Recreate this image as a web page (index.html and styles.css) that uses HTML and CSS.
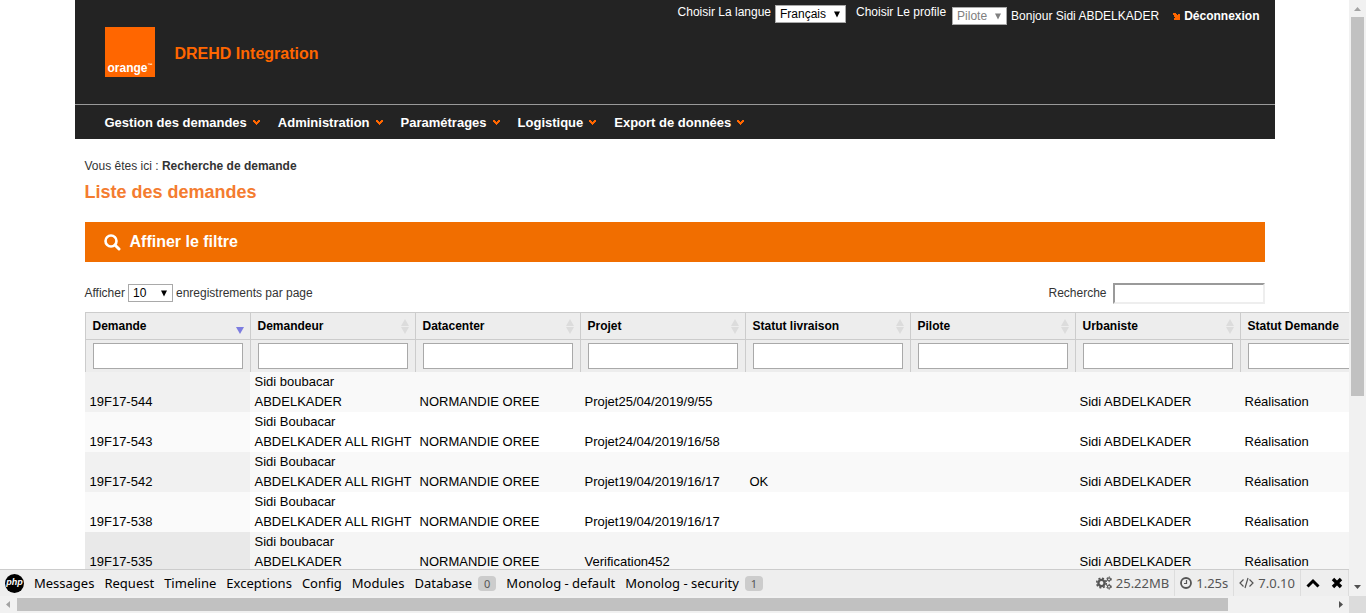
FILE: index.html
```html
<!DOCTYPE html>
<html lang="fr">
<head>
<meta charset="utf-8">
<title>DREHD Integration - Liste des demandes</title>
<link rel="stylesheet" href="styles.css">
</head>
<body>
<svg class="defs" aria-hidden="true">
  <symbol id="tri" viewBox="0 0 8 7"><path d="M1 0.5h6L4 6.5z"/></symbol>
  <symbol id="chev" viewBox="0 0 7 5"><path d="M0 0h2v1h1v1h1V1h1V0h2v2H6v1H5v1H4v1H3V4H2V3H1V2H0z"/></symbol>
  <symbol id="sort" viewBox="0 0 8 15"><path d="M4 0l4 7H0zM0 8h8l-4 7z"/></symbol>
</svg>
<div class="frame">
  <div class="view">
    <div class="content">
      <header class="header">
        <div class="top">
          <div class="brand">
            <div class="logo">orange<span class="tm">™</span></div>
            <div class="app">DREHD Integration</div>
          </div>
          <div class="user">
            <label class="pick" for="langue">Choisir La langue</label>
            <span class="sel lang"><select id="langue"><option>Français</option></select><svg><use href="#tri"/></svg></span>
            <label class="pick second" for="profil">Choisir Le profile</label>
            <span class="sel role"><select id="profil" disabled><option>Pilote</option></select><svg><use href="#tri"/></svg></span>
            <span class="hello">Bonjour Sidi ABDELKADER</span>
            <a class="logout" href="#"><svg viewBox="0 0 7 7"><path d="M0 0h3v1h1v1h1V1h2v6H1V5h1V4H1V2H0z"/></svg>Déconnexion</a>
          </div>
        </div>
        <nav class="nav">
          <a href="#">Gestion des demandes<svg><use href="#chev"/></svg></a>
          <a href="#">Administration<svg><use href="#chev"/></svg></a>
          <a href="#">Paramétrages<svg><use href="#chev"/></svg></a>
          <a href="#">Logistique<svg><use href="#chev"/></svg></a>
          <a href="#">Export de données<svg><use href="#chev"/></svg></a>
        </nav>
      </header>
      <main class="main">
        <p class="crumb">Vous êtes ici : <b>Recherche de demande</b></p>
        <h1>Liste des demandes</h1>
        <button class="filter" type="button"><svg viewBox="0 0 17 17"><circle cx="7" cy="7" r="5.500" fill="none" stroke="#fff" stroke-width="2.600"/><path d="M11.200 11.200l3.800 3.800" stroke="#fff" stroke-width="3" stroke-linecap="round"/></svg>Affiner le filtre</button>
        <div class="tools">
          <div class="length"><label for="nb">Afficher</label><span class="sel count"><select id="nb"><option>10</option></select><svg><use href="#tri"/></svg></span><span>enregistrements par page</span></div>
          <div class="search"><label for="q">Recherche</label><input id="q" type="search"></div>
        </div>
        <table class="grid">
          <thead>
            <tr>
              <th class="sorted"><div>Demande<svg viewBox="0 0 8 15"><path d="M0 8h8l-4 7z"/></svg></div></th>
              <th><div>Demandeur<svg><use href="#sort"/></svg></div></th>
              <th><div>Datacenter<svg><use href="#sort"/></svg></div></th>
              <th><div>Projet<svg><use href="#sort"/></svg></div></th>
              <th><div>Statut livraison<svg><use href="#sort"/></svg></div></th>
              <th><div>Pilote<svg><use href="#sort"/></svg></div></th>
              <th><div>Urbaniste<svg><use href="#sort"/></svg></div></th>
              <th><div>Statut Demande<svg><use href="#sort"/></svg></div></th>
            </tr>
            <tr class="inputs">
              <td><input type="text" aria-label="Demande"></td>
              <td><input type="text" aria-label="Demandeur"></td>
              <td><input type="text" aria-label="Datacenter"></td>
              <td><input type="text" aria-label="Projet"></td>
              <td><input type="text" aria-label="Statut livraison"></td>
              <td><input type="text" aria-label="Pilote"></td>
              <td><input type="text" aria-label="Urbaniste"></td>
              <td><input type="text" aria-label="Statut Demande"></td>
            </tr>
          </thead>
          <tbody>
            <tr><td>19F17-544</td><td>Sidi boubacar<br>ABDELKADER</td><td>NORMANDIE OREE</td><td>Projet25/04/2019/9/55</td><td></td><td></td><td>Sidi ABDELKADER</td><td>Réalisation</td></tr>
            <tr><td>19F17-543</td><td>Sidi Boubacar<br>ABDELKADER ALL RIGHT</td><td>NORMANDIE OREE</td><td>Projet24/04/2019/16/58</td><td></td><td></td><td>Sidi ABDELKADER</td><td>Réalisation</td></tr>
            <tr><td>19F17-542</td><td>Sidi Boubacar<br>ABDELKADER ALL RIGHT</td><td>NORMANDIE OREE</td><td>Projet19/04/2019/16/17</td><td>OK</td><td></td><td>Sidi ABDELKADER</td><td>Réalisation</td></tr>
            <tr><td>19F17-538</td><td>Sidi Boubacar<br>ABDELKADER ALL RIGHT</td><td>NORMANDIE OREE</td><td>Projet19/04/2019/16/17</td><td></td><td></td><td>Sidi ABDELKADER</td><td>Réalisation</td></tr>
            <tr class="hover"><td>19F17-535</td><td>Sidi boubacar<br>ABDELKADER</td><td>NORMANDIE OREE</td><td>Verification452</td><td></td><td></td><td>Sidi ABDELKADER</td><td>Réalisation</td></tr>
          </tbody>
        </table>
      </main>
    </div>
    <footer class="debug">
      <div class="tabs">
        <span class="php">php</span>
        <a href="#">Messages</a><a href="#">Request</a><a href="#">Timeline</a><a href="#">Exceptions</a><a href="#">Config</a><a href="#">Modules</a><a href="#">Database<span class="badge">0</span></a><a href="#">Monolog - default</a><a href="#">Monolog - security<span class="badge">1</span></a>
      </div>
      <div class="stats">
        <span class="stat"><svg class="gears" viewBox="0 0 16 14"><g fill="none" stroke="#555"><circle cx="5.500" cy="7" r="3.100" stroke-width="2.400"/><circle cx="5.500" cy="7" r="4.800" stroke-width="1.600" stroke-dasharray="2 1.770"/><circle cx="13" cy="3.300" r="1.500" stroke-width="1.200"/><circle cx="13" cy="3.300" r="2.400" stroke-width="1" stroke-dasharray="1.200 1.300"/><circle cx="13" cy="10.700" r="1.500" stroke-width="1.200"/><circle cx="13" cy="10.700" r="2.400" stroke-width="1" stroke-dasharray="1.200 1.300"/></g></svg>25.22MB</span>
        <span class="stat"><svg class="clock" viewBox="0 0 12 12"><g fill="none" stroke="#555"><circle cx="6" cy="6" r="5" stroke-width="1.800"/><path d="M6.500 3v3.500H4" stroke-width="1.200"/></g></svg>1.25s</span>
        <span class="stat"><svg class="code" viewBox="0 0 15 12"><path d="M4.500 2.500L1 6l3.500 3.500M10.500 2.500L14 6l-3.500 3.500M9 1L6 11" fill="none" stroke="#555" stroke-width="1.200"/></svg>7.0.10</span>
        <button type="button" aria-label="Réduire"><svg viewBox="0 0 14 12"><path d="M1.500 9.500L7 4l5.500 5.500" fill="none" stroke="#000" stroke-width="3"/></svg></button>
        <button type="button" aria-label="Fermer"><svg viewBox="0 0 12 12"><path d="M2 2l8 8M10 2l-8 8" fill="none" stroke="#000" stroke-width="3.400"/></svg></button>
      </div>
    </footer>
  </div>
  <div class="vbar" aria-hidden="true"><svg viewBox="0 0 17 17"><path d="M5 11h7L8.500 7z" fill="#a3a3a3"/></svg><i></i><svg viewBox="0 0 17 17"><path d="M5 6h7l-3.500 4z" fill="#505050"/></svg></div>
  <div class="hbar" aria-hidden="true"><svg viewBox="0 0 17 17"><path d="M10 5v7L6 8.500z" fill="#a3a3a3"/></svg><i></i><svg viewBox="0 0 17 17"><path d="M7 5v7l4-3.500z" fill="#505050"/></svg></div>
  <div class="corner"></div>
</div>
</body>
</html>
```
FILE: styles.css
```css
* { box-sizing: border-box; }
body { margin: 0; background: #fff; color: #333; font: 12px/18px "Liberation Sans", Arial, sans-serif; }
a { color: inherit; text-decoration: none; }
button { font: inherit; border: 0; padding: 0; cursor: pointer; }
.defs { display: none; }

.frame { display: grid; grid-template: minmax(0, 1fr) 17px / minmax(0, 1fr) 17px; height: 100vh; overflow: hidden; }
.view { display: flex; flex-direction: column; min-width: 0; }
.content { flex: 1; min-height: 0; overflow: hidden; }

.header, .main { max-width: 1200px; margin: 0 auto; }
.header { background: #232323; color: #fff; }
.top { display: flex; justify-content: space-between; height: 105px; padding: 0 15px 0 30px; border-bottom: 1px solid #999; }
.brand { display: flex; gap: 20px; padding-top: 27px; }
.logo { display: flex; align-items: flex-end; width: 50px; height: 50px; padding-left: 3px; background: #f60; color: #fff; font-weight: bold; font-size: 12px; line-height: 17px; }
.tm { font-size: 5px; line-height: 24px; }
.app { color: #f60; font-size: 16px; font-weight: bold; line-height: 54px; }
.user { display: flex; align-items: flex-start; }
.pick { line-height: 24px; margin-right: 4px; }
.second { margin: 0 6px 0 10px; }
.hello { margin-left: 4px; line-height: 32px; }
.logout { display: flex; align-items: center; gap: 4px; margin-left: 14px; font-weight: bold; line-height: 32px; }
.logout svg { width: 7px; height: 7px; fill: #f60; }

.sel { position: relative; display: inline-block; height: 18px; }
.sel select { appearance: none; width: 100%; height: 100%; margin: 0; padding: 0 4px; border: 1px solid #a9a9a9; border-radius: 0; background: #fff; color: #000; font: inherit; line-height: 16px; display: block; opacity: 1; }
.sel svg { position: absolute; right: 5px; top: 6px; width: 8px; height: 7px; fill: #000; pointer-events: none; }
.lang { width: 71px; margin-top: 5px; }
.role { width: 55px; margin-top: 7px; }
.role select { color: #808080; }
.role svg { fill: #808080; }
.count { width: 45px; }

.nav { display: flex; gap: 18px; height: 34px; padding: 1px 0 0 30px; font-size: 13px; font-weight: bold; line-height: 34px; }
.nav a { display: flex; align-items: center; gap: 6px; }
.nav svg { width: 7px; height: 5px; fill: #f60; }

.main { padding: 18px 10px 0; }
.crumb { margin: 0; }
h1 { margin: 6px 0 18px; color: #f47c30; font-size: 18px; line-height: 23px; }
.filter { display: flex; align-items: center; gap: 9px; width: 100%; height: 40px; padding-left: 19px; background: #f16e00; color: #fff; font-size: 16px; font-weight: bold; }
.filter svg { width: 17px; height: 17px; }
.tools { display: flex; justify-content: space-between; align-items: center; height: 50px; padding-top: 12px; }
.length { display: flex; align-items: center; gap: 3px; }
.search { display: flex; align-items: center; gap: 6px; }
.search input { appearance: none; width: 152px; height: 21px; margin: 0; padding: 1px; border: 2px inset #eee; border-radius: 0; background: #fff; }

.grid { width: 1320px; table-layout: fixed; border-spacing: 0; color: #000; font-size: 13px; line-height: 20px; }
.grid td, .grid th { padding: 0; text-align: left; }
.grid thead th, .grid thead td { background: #ededed; border-left: 1px solid #ccc; padding-left: 7px; }
.grid th { height: 28px; border-top: 1px solid #ccc; border-bottom: 1px solid #ccc; font-size: 12px; }
.grid th div { display: flex; align-items: center; justify-content: space-between; padding-right: 6px; }
.grid th svg { width: 8px; height: 15px; fill: #dcdcdc; }
.grid .sorted svg { fill: #7c7ce0; }
.inputs td { height: 32px; }
.inputs input { display: block; width: 150px; height: 26px; margin: 0; padding: 2px 4px; border: 1px solid #a9a9a9; background: #fff; }
.grid tbody td { height: 40px; padding-left: 5px; vertical-align: bottom; white-space: nowrap; }
tbody tr:nth-child(odd) { background: #f9f9f9; }
tbody tr:nth-child(odd) td:first-child { background: #f1f1f1; }
tbody tr:nth-child(even) td:first-child { background: #fafafa; }
tbody tr.hover { background: #f5f5f5; }
tbody tr.hover td:first-child { background: #e9e9e9; }

.debug { display: flex; justify-content: space-between; height: 27px; padding-left: 5px; background: #eee; border-top: 1px solid #ccc; color: #000; font: 13px/26px "Noto Sans", "Open Sans", sans-serif; white-space: nowrap; }
.tabs, .stats, .tabs a, .stat { display: flex; align-items: center; }
.tabs { gap: 10px; }
.php { width: 19px; height: 19px; border-radius: 50%; background: #000; color: #fff; font: italic bold 9px/17px "Liberation Sans", Arial, sans-serif; text-align: center; }
.badge { margin-left: 6px; padding: 0 6px; border-radius: 4px; background: #ccc; color: #555; font-size: 11px; line-height: 15px; }
.stat { gap: 4px; padding: 0 5px; border-right: 1px solid #ddd; color: #555; }
.gears { width: 16px; height: 14px; }
.clock { width: 12px; height: 12px; }
.code { width: 15px; height: 12px; }
.stats button { display: flex; align-items: center; justify-content: center; width: 24px; height: 26px; background: none; }
.stats button:last-child { border-right: 1px solid #ddd; }
.stats button svg { width: 14px; height: 12px; }

.vbar, .hbar { display: flex; background: #f1f1f1; }
.vbar { flex-direction: column; }
.vbar svg, .hbar svg { flex: none; width: 17px; height: 17px; }
.vbar i { flex: 0 0 379px; margin: 0 2px auto; background: #c1c1c1; }
.hbar i { flex: 0 0 1211px; margin: 2px auto 2px 0; background: #c1c1c1; }
.corner { background: #dcdcdc; }
```
